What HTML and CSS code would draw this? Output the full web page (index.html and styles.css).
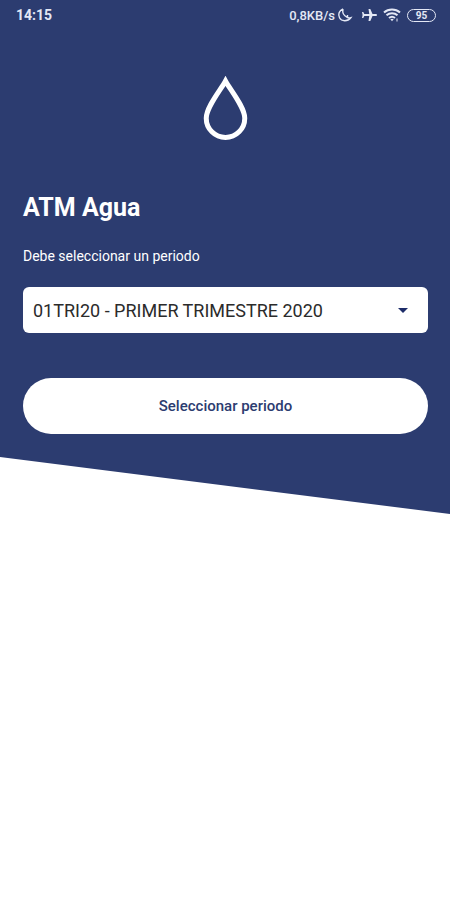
FILE: index.html
```html
<!DOCTYPE html>
<html lang="es">
<head>
<meta charset="utf-8">
<meta name="viewport" content="width=device-width, initial-scale=1">
<title>ATM Agua</title>
<link rel="stylesheet" href="styles.css">
</head>
<body>
<div class="hero">
  <header class="status">
    <span class="clock">14:15</span>
    <div class="indicators">
      <span class="speed">0,8KB/s</span>
      <svg class="moon" width="16" height="16" viewBox="0 0 16 16" aria-hidden="true"><path d="M6 2C2 3.500 .8 7.500 2.500 10.800 4.500 14.500 10.500 15 13.800 10.700 12.500 11 11.500 11 10.500 10.500M6 2C5.200 5.500 6.500 8.800 10.500 10.500V8"/></svg>
      <svg class="plane" width="16" height="16" viewBox="0 0 16 16" aria-hidden="true"><path d="M16 8c0-.7-.5-1.100-1.300-1.100h-3.200L9.300 2H7.500l.8 4.900H3.300L2.300 5H1l.6 3L1 11h1.300l1-1.900h5L7.500 14h1.800l2.200-4.900h3.200C15.500 9.100 16 8.700 16 8Z"/></svg>
      <svg class="wifi" width="18" height="14" viewBox="0 0 18 14" aria-hidden="true"><path d="M1 4.500C5.500.5 12.500.5 17 4.500M3.500 7.300c3.200-2.800 7.800-2.800 11 0M6 10c1.800-1.500 4.200-1.500 6 0"/><path class="dot" d="M7.300 11.300c1-.8 2.400-.8 3.400 0L9 13.300Z"/><path class="mark" d="M14 10.500v3"/></svg>
      <span class="battery">95</span>
    </div>
  </header>
  <main class="content">
    <svg class="drop" width="46" height="64" viewBox="0 0 46 64" role="img" aria-label="Agua"><path d="M22.500 5C18 13.500 3.250 31 3.250 42.200a19.250 19.250 0 0 0 38.500 0C41.750 31 27 13.500 22.500 5Z"/></svg>
    <h1>ATM Agua</h1>
    <form class="period">
      <label for="period">Debe seleccionar un periodo</label>
      <div class="picker">
        <select id="period"><option>01TRI20 - PRIMER TRIMESTRE 2020</option></select>
        <svg class="arrow" width="10" height="5" viewBox="0 0 10 5" aria-hidden="true"><path d="M0 0h10L5 5Z"/></svg>
      </div>
      <button type="button">Seleccionar periodo</button>
    </form>
  </main>
</div>
</body>
</html>
```
FILE: styles.css
```css
* {
  box-sizing: border-box;
}

body {
  margin: 0;
  background: #fff;
  color: #fff;
  font-family: Roboto, sans-serif;
}

.hero {
  padding-bottom: 80px;
  background: #2c3c70;
  clip-path: polygon(0 0, 100% 0, 100% 100%, 0 calc(100% - 57px));
}

.status {
  display: flex;
  align-items: center;
  justify-content: space-between;
  height: 30px;
  padding: 0 14px 0 16px;
  color: #e4e8f5;
}

.clock {
  font-size: 14px;
  font-weight: 700;
}

.indicators {
  display: flex;
  align-items: center;
}

.speed {
  font-size: 13px;
  font-weight: 500;
}

.moon,
.wifi {
  fill: none;
  stroke: currentColor;
}

.moon {
  margin: 0 8px 0 2px;
  stroke-width: 1.4;
}

.plane,
.wifi .dot {
  fill: currentColor;
}

.wifi {
  margin: 0 6px;
  stroke-width: 2;
}

.wifi .dot {
  stroke: none;
}

.wifi .mark {
  stroke-width: 1;
}

.battery {
  width: 29px;
  border: 1px solid currentColor;
  border-radius: 7px;
  font-size: 10px;
  font-weight: 700;
  line-height: 11px;
  text-align: center;
}

.content {
  padding: 46px 22px 0 23px;
}

.drop {
  display: block;
  margin: 0 auto;
  fill: none;
  stroke: #fff;
  stroke-width: 5;
}

h1 {
  margin: 53px 0 0;
  font-size: 25px;
  font-weight: 700;
  line-height: 30px;
}

.period {
  display: flex;
  flex-direction: column;
}

label {
  margin: 23px 0 21px;
  font-size: 14px;
  line-height: 20px;
}

.picker {
  display: grid;
  align-items: center;
}

.picker > * {
  grid-area: 1 / 1;
}

select {
  appearance: none;
  width: 100%;
  height: 46px;
  padding: 0 40px 0 10px;
  border: 0;
  border-radius: 6px;
  background: #fff;
  color: #2b2b2b;
  font: 400 18px Roboto, sans-serif;
}

.arrow {
  justify-self: end;
  margin-right: 20px;
  fill: #1d2c69;
  pointer-events: none;
}

button {
  height: 56px;
  margin-top: 45px;
  border: 0;
  border-radius: 28px;
  background: #fff;
  color: #2c3c70;
  font: 500 15px Roboto, sans-serif;
}
```
